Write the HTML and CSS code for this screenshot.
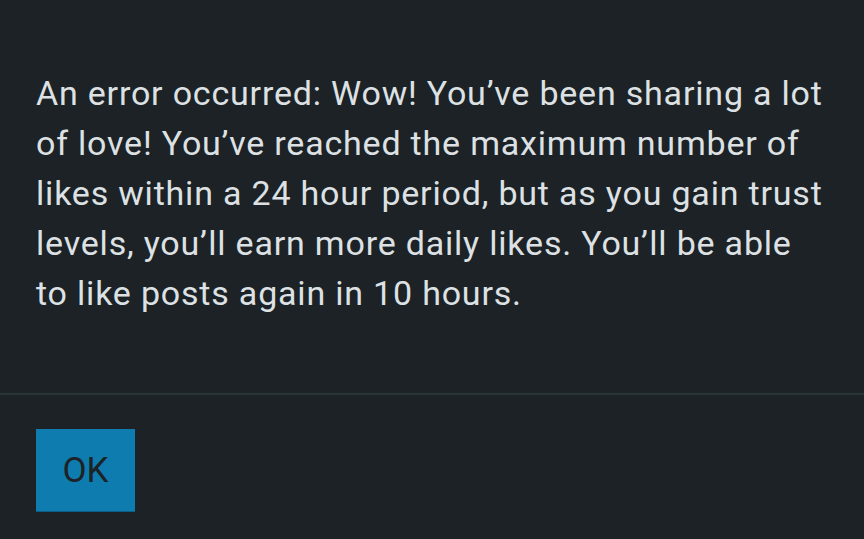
FILE: index.html
```html
<!DOCTYPE html>
<html lang="en">
<head>
    <meta charset="UTF-8">
    <meta name="viewport" content="width=device-width, initial-scale=1.0">
    <title>Error</title>
    <link rel="stylesheet" href="styles.css">
</head>
<body>
    <div class="dialog">
        <div class="dialog-body">
            <p>An error occurred: Wow! You’ve been sharing a lot of love! You’ve reached the maximum number of likes within a 24 hour period, but as you gain trust levels, you’ll earn more daily likes. You’ll be able to like posts again in 10 hours.</p>
        </div>
        <div class="dialog-footer">
            <button type="button" class="btn-ok">OK</button>
        </div>
    </div>
</body>
</html>
```

FILE: styles.css
```css
body {
    margin: 0;
    font-family: Roboto, "Noto Sans", sans-serif;
    background-color: #1c2226;
    color: #dde1e4;
    overflow: hidden;
}

.dialog-body {
    padding: 68px 36px 75px 36px;
}

.dialog-body p {
    margin: 0;
    font-size: 34px;
    line-height: 50px;
    letter-spacing: 0.8px;
}

.dialog-footer {
    border-top: 2px solid #2a3437;
    padding: 34px 36px;
}

.btn-ok {
    width: 99px;
    height: 83px;
    background-color: #0e7caf;
    color: #1c2226;
    border: none;
    border-bottom: 1px solid #0b5f86;
    border-radius: 0;
    font-family: Roboto, sans-serif;
    font-size: 35px;
    padding: 0;
}
```
